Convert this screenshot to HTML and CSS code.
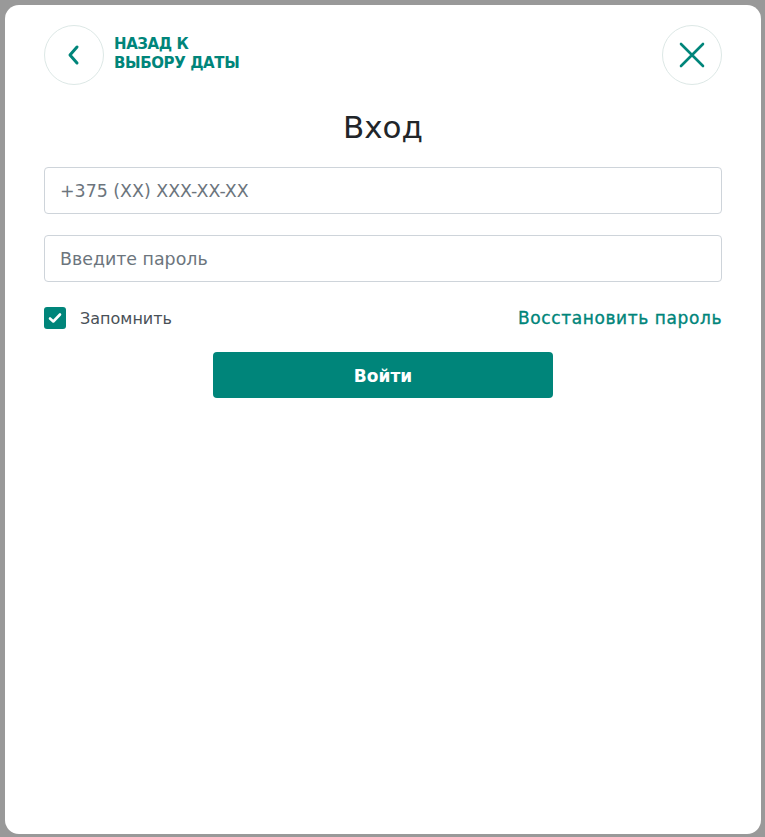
FILE: index.html
```html
<!DOCTYPE html>
<html lang="ru">
<head>
<meta charset="utf-8">
<title>Вход</title>
<link rel="stylesheet" href="styles.css">
</head>
<body>
<div class="modal">
  <div class="header">
    <div class="back">
      <span class="circle">
        <svg width="16" height="24" viewBox="0 0 16 24"><path d="M11 4 L4 12 L11 20" fill="none" stroke="#00857a" stroke-width="3" stroke-linecap="round" stroke-linejoin="round"/></svg>
      </span>
      <span class="back-text">НАЗАД К<br>ВЫБОРУ ДАТЫ</span>
    </div>
    <span class="circle">
      <svg width="26" height="26" viewBox="0 0 26 26"><path d="M2 2 L24 24 M24 2 L2 24" fill="none" stroke="#00857a" stroke-width="2.6" stroke-linecap="round"/></svg>
    </span>
  </div>
  <h1 class="title">Вход</h1>
  <div class="form">
    <div class="input">+375 (XX) XXX-XX-XX</div>
    <div class="input">Введите пароль</div>
    <div class="row">
      <label class="remember">
        <span class="check">
          <svg width="14" height="12" viewBox="0 0 14 12"><path d="M2 6.5 L5.3 9.5 L12 2.5" fill="none" stroke="#fff" stroke-width="2.6" stroke-linecap="round" stroke-linejoin="round"/></svg>
        </span>
        Запомнить
      </label>
      <a class="restore">Восстановить пароль</a>
    </div>
    <div class="submit-wrap"><button class="submit">Войти</button></div>
  </div>
</div>
</body>
</html>
```
FILE: styles.css
```css
html, body {
  margin: 0;
  padding: 0;
  background: #999999;
  height: 837px;
  overflow: hidden;
}
body {
  font-family: "DejaVu Sans", "Noto Sans", sans-serif;
  padding: 5px 4px 0 5px;
  box-sizing: border-box;
}
.modal {
  width: 756px;
  height: 829px;
  background: #ffffff;
  border-radius: 14px;
  box-sizing: border-box;
  padding: 20px 39px 0 39px;
}
.header {
  display: flex;
  justify-content: space-between;
  align-items: center;
}
.back {
  display: flex;
  align-items: center;
  gap: 10px;
}
.circle {
  width: 60px;
  height: 60px;
  box-sizing: border-box;
  border: 1px solid #dde8e6;
  border-radius: 50%;
  display: flex;
  align-items: center;
  justify-content: center;
}
.back-text {
  color: #00857a;
  font-weight: 700;
  font-size: 15px;
  line-height: 19px;
  letter-spacing: -0.4px;
  margin-top: -2px;
}
.title {
  margin: 22px 0 20px;
  text-align: center;
  font-weight: 400;
  font-size: 31px;
  line-height: 40px;
  color: #212529;
}
.form {
  display: flex;
  flex-direction: column;
}
.input {
  height: 47px;
  box-sizing: border-box;
  border: 1px solid #ced4da;
  border-radius: 4px;
  padding: 0 15px;
  display: flex;
  align-items: center;
  font-size: 17.4px;
  color: #6c757d;
  margin-bottom: 21px;
}
.input + .input {
  margin-bottom: 0;
}
.row {
  display: flex;
  justify-content: space-between;
  align-items: center;
  margin-top: 25px;
}
.remember {
  display: flex;
  align-items: center;
  gap: 14px;
  font-size: 16px;
  color: #495057;
}
.check {
  width: 22px;
  height: 22px;
  border-radius: 3px;
  background: #00857a;
  display: flex;
  align-items: center;
  justify-content: center;
}
.restore {
  color: #00857a;
  font-size: 17px;
  font-weight: 400;
  letter-spacing: 0.6px;
  -webkit-text-stroke: 0.35px #00857a;
}
.submit-wrap {
  display: flex;
  justify-content: center;
  margin-top: 23px;
}
.submit {
  width: 340px;
  height: 46px;
  border: none;
  border-radius: 4px;
  background: #00857a;
  color: #ffffff;
  font-family: inherit;
  font-size: 17px;
  font-weight: 700;
  padding: 2px 0 0;
}
```
